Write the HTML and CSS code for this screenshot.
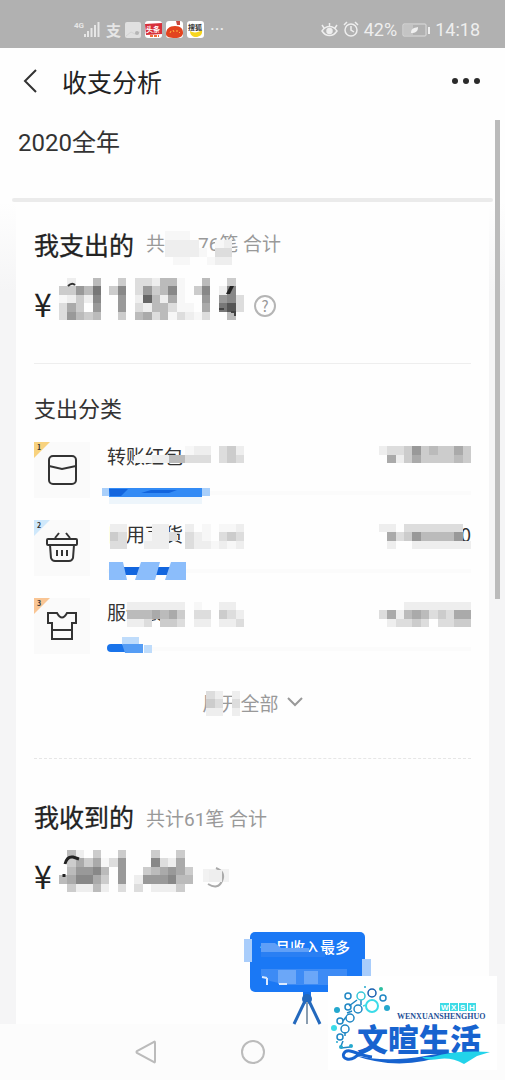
FILE: index.html
```html
<!DOCTYPE html>
<html lang="zh-CN">
<head>
    <meta charset="UTF-8">
    <meta name="viewport" content="width=device-width, initial-scale=1.0">
    <title>收支分析</title>
    <link rel="stylesheet" href="styles.css">
</head>
<body>
    <div class="status-bar">
        <div class="status-left">
            <svg width="28" height="20" viewBox="0 0 28 20">
                <text class="network" x="0" y="8">4G</text>
                <path d="M11 17v-3M14 17v-6M17.500 17v-9M21 17V5M24.500 17V2" stroke="#e6e6e6" stroke-width="2" />
            </svg>
            <span class="pay-mark">支</span>
            <svg width="16" height="16" viewBox="0 0 16 16">
                <rect width="16" height="16" rx="2" fill="#e0e0e0" />
                <path d="M1 14l5-4 4 2 5-2" fill="none" stroke="#d2d2d2" />
                <circle cx="12" cy="11" r="2" fill="#b5b5b5" />
            </svg>
            <svg width="17" height="17" viewBox="0 0 17 17">
                <rect width="17" height="17" rx="3" fill="#fff" />
                <path d="M0 3l17-1v11L1 14z" fill="#d7303a" />
                <text class="app-name app-name-light" x="1" y="11">头条</text>
                <path d="M5 15h9" stroke="#f06a35" stroke-width="2" stroke-dasharray="3 1" />
            </svg>
            <svg width="17" height="17" viewBox="0 0 17 17">
                <rect width="17" height="17" rx="3" fill="#fff" />
                <path d="M0 13c0-5 3-8 9-8s8 3 8 7c0 3-3 5-8 5s-9-1-9-4z" fill="#e2431f" />
                <path d="M10 0h4v4h-3z" fill="#c8493f" />
                <path d="M4 12l1-2M7 9l1 2M11 9v2M13 11l1 1" stroke="#ffb43b" />
            </svg>
            <svg width="17" height="17" viewBox="0 0 17 17">
                <rect width="17" height="17" rx="3" fill="#fff" />
                <path d="M3 10c3 2 8 2 12-1 1 5-3 7-6 7s-6-2-6-6z" fill="#f6d51e" />
                <text class="app-name" x="1" y="9">搜狐</text>
            </svg>
            <span class="more-dots">···</span>
        </div>
        <div class="status-right">
            <svg width="17" height="16" viewBox="0 0 17 16" fill="none" stroke="#eee" stroke-width="1.500">
                <path d="M1 9c4-6 11-6 15 0-4 6-11 6-15 0zM1 3l2 3M8.500 1v3M16 3l-2 3" />
                <circle cx="8.500" cy="9" r="2.500" fill="#eee" />
            </svg>
            <svg width="16" height="17" viewBox="0 0 16 17" fill="none" stroke="#eee" stroke-width="1.500">
                <circle cx="8" cy="9" r="6" />
                <path d="M8 5v4l3 2M1 4l3-3M15 4l-3-3" />
            </svg>
            <span>42%</span>
            <svg class="battery" width="28" height="14" viewBox="0 0 28 14">
                <rect x="1" y="1" width="23" height="12" rx="1" fill="none" stroke="#ddd" />
                <rect x="2" y="2" width="9" height="10" fill="#c4c4c4" />
                <path d="M9 10c0-4 2-5 7-6 0 4-2 6-7 6z" fill="#f0f0f0" />
                <path d="M27 4v7" stroke="#eee" stroke-width="2" />
            </svg>
            <span>14:18</span>
        </div>
    </div>

    <header>
        <button class="back" aria-label="返回">
            <svg width="16" height="26" viewBox="0 0 16 26"><path d="M14 2L3 13l11 11" fill="none" stroke="#333" stroke-width="2" /></svg>
        </button>
        <h1>收支分析</h1>
        <button class="menu" aria-label="更多">
            <svg width="30" height="8" viewBox="0 0 30 8" fill="#2b2b2b">
                <circle cx="4" cy="4" r="3" /><circle cx="15" cy="4" r="3" /><circle cx="26" cy="4" r="3" />
            </svg>
        </button>
    </header>

    <main>
        <div class="period">2020全年</div>
        <div class="slot"></div>
        <div class="scroll-thumb"></div>

        <div class="sheet">
            <section class="card">
                <div class="card-head">
                    <h2>我支出的</h2>
                    <p class="count">共<svg class="mosaic" data-rows="fff.....|eeee..fe|eeeef.dd|.ff..fee"></svg>76笔 合计</p>
                </div>
                <div class="amount">
                    <span class="yen">¥</span>
                    <span class="hidden-sum">
                        <svg class="mosaic" data-rows=".e..b..c.ddebbf..b..c.|cc9b7.c8.d9cb8f.c8.e8.|fece8..9.e6beaf..9.98d|dac.9..9.debbdff.a.75d|d9bcb..c.badbfdefd..b."></svg>
                        <svg class="trace" width="185" height="42" viewBox="0 0 185 42">
                            <path d="M9 8q4-4 7-1" fill="none" stroke="#333" stroke-width="2" />
                            <path d="M171 8h4l-4 8h-4z" fill="#222" />
                            <path d="M160 31h5M172 34h4v4" fill="none" stroke="#444" stroke-width="2" />
                        </svg>
                    </span>
                    <button class="help" aria-label="说明">?</button>
                </div>
                <hr>
                <h3>支出分类</h3>
                <ul class="categories">
                    <li>
                        <div class="tile rank-1">
                            <span class="rank">1</span>
                            <svg width="32" height="32" viewBox="0 0 32 32" fill="none" stroke="#333" stroke-width="2">
                                <rect x="3" y="2" width="27" height="28" rx="4" />
                                <path d="M3 12l13 3 14-3" />
                            </svg>
                        </div>
                        <div class="detail">
                            <div class="line">
                                <span class="name">转账红包
                                    <svg class="mosaic" data-rows=".........fee.dce|...ffeebbddd.dcd"></svg>
                                </span>
                                <svg class="mosaic" data-rows="eddc9cbccac|.aecaccccbc"></svg>
                            </div>
                            <div class="bar">
                                <svg width="112" height="16" viewBox="0 0 112 16">
                                    <path d="M2 9h93v7H2z" fill="#edf5fb" />
                                    <path d="M-5 0H3v8h-8zM95 0h8v8h-8z" fill="#a9cffa" />
                                    <path d="M2 0h93v9H2z" fill="#338bf5" />
                                    <path d="M2 1h19l-7 7H3zM44 2h26l-8 3H34z" fill="#1265de" />
                                </svg>
                            </div>
                        </div>
                    </li>
                    <li>
                        <div class="tile rank-2">
                            <span class="rank">2</span>
                            <svg width="32" height="32" viewBox="0 0 32 32" fill="none" stroke="#333" stroke-width="2">
                                <path d="M9 6l4-5M20 1l4 5" />
                                <rect x="1" y="7" width="30" height="6" rx="1" />
                                <path d="M4 13l1 13q1 3 4 3h14q3 0 4-3l1-13M11 18v6M16 18v6M21 18v6" />
                            </svg>
                        </div>
                        <div class="detail">
                            <div class="line">
                                <span class="name">日用百货
                                    <svg class="mosaic" data-rows="ee...ee..e.f.ffe|cd..feed.def.dcd|dd..eee..deefefe"></svg>
                                </span>
                                <span class="last-digit">0
                                    <svg class="mosaic" data-rows="ee.ddddddd.|.adc9bbbb9.|.e..eeeeeee"></svg>
                                </span>
                            </div>
                            <div class="bar">
                                <svg width="112" height="16" viewBox="0 0 112 16">
                                    <path d="M8 1h60v8H8z" fill="#1265de" />
                                    <path d="M2-4h14l4 18H2zM34-4h19l-5 18H28zM64-4h15v18H58z" fill="#8bbdfb" />
                                </svg>
                            </div>
                        </div>
                    </li>
                    <li>
                        <div class="tile rank-3">
                            <span class="rank">3</span>
                            <svg width="32" height="32" viewBox="0 0 32 32" fill="none" stroke="#333" stroke-width="2">
                                <path d="M2 3h9q5 9 10 0h9v10h-4v16H6V13H2zM6 20h20" />
                            </svg>
                        </div>
                        <div class="detail">
                            <div class="line">
                                <span class="name">服饰装扮
                                    <svg class="mosaic" data-rows="..eeeeeee.f..ee.|..bbbabac.dd.cde|..eed.ccd.ee.eed"></svg>
                                </span>
                                <svg class="mosaic" data-rows="...eeeeeeee|daebabdcdaa|.eddcd.ddcc"></svg>
                            </div>
                            <div class="bar">
                                <svg width="112" height="16" viewBox="0 0 112 16">
                                    <path d="M4 0h32v8H4q-4 0-4-4t4-4z" fill="#1973ea" />
                                    <path d="M15-7h17v8H15zM37 1h8v8h-8z" fill="#bfdcfb" />
                                    <path d="M15 0h21v9H18z" fill="#559df5" />
                                </svg>
                            </div>
                        </div>
                    </li>
                </ul>
                <button class="expand">
                    <span class="expand-text">展开全部
                        <svg class="mosaic" data-rows="de.e|cd.d|ee.e"></svg>
                    </span>
                    <svg width="16" height="10" viewBox="0 0 16 10"><path d="M1 1l7 7 7-7" fill="none" stroke="#999" stroke-width="2" /></svg>
                </button>
            </section>

            <section class="card income">
                <div class="card-head">
                    <h2>我收到的</h2>
                    <p class="count">共计61笔 合计</p>
                </div>
                <div class="amount">
                    <span class="yen">¥</span>
                    <span class="hidden-sum">
                        <svg class="mosaic" data-rows=".be.c..c...c..c.|.cacafd9...8dea.|.b998b.9..cba9ac|ba88ac.9.e9998bb|.ceebe.d.d.eeec."></svg>
                        <svg class="trace" width="134" height="42" viewBox="0 0 134 42">
                            <path d="M5 24v3M6 14q2-8 8-7l6 2" fill="none" stroke="#222" stroke-width="3" />
                        </svg>
                    </span>
                    <svg class="covered-help" width="30" height="24" viewBox="0 0 30 24">
                        <path d="M0 4h26v13H0z" fill="#f2f2f2" />
                        <path d="M5 19q10 6 14-3t-6-13" fill="none" stroke="#aaa" stroke-width="2" />
                        <path d="M6 5h13v12H6z" fill="#eee" />
                    </svg>
                </div>
                <div class="sign">
                    <svg width="130" height="92" viewBox="0 0 130 92">
                        <path d="M61 60h8v5h-8z" fill="#1670e8" />
                        <circle cx="65" cy="67" r="5" fill="#2469bd" />
                        <path d="M63 69L52 92M67 69l11 23" stroke="#2469bd" stroke-width="3" />
                        <path d="M65 70v22" stroke="#8a9db0" stroke-width="2" />
                        <rect x="8" y="0" width="115" height="60" rx="5" fill="#1a78f5" />
                        <text class="sign-text" x="18" y="21">一月收入最多</text>
                        <path d="M19 11h14l6 5h28v4H19z" fill="#5f9ff7" />
                        <path d="M19 20h54l10-1v6H19z" fill="#2a7ff3" />
                        <path d="M19 37h86v16H45l-17-4-9-5z" fill="#3d8bf5" />
                        <path d="M36 38h18v14H36zM62 39h14v13H62z" fill="#6ba7f8" />
                        <path d="M20 45l5 1M25 46v7M37 52h8" stroke="#dceafe" stroke-width="2" />
                        <path d="M2 7h8v23H2z" fill="#a9cdfb" />
                        <path d="M120 27h9v18h-9z" fill="#a9cdfb" />
                    </svg>
                </div>
            </section>
        </div>
    </main>

    <footer>
        <button aria-label="后退">
            <svg width="24" height="26" viewBox="0 0 24 26"><path d="M20 3q1-1 1 1v18q0 2-1 1L3 14q-1-1 0-2z" fill="none" stroke="#bbb" stroke-width="2" /></svg>
        </button>
        <button aria-label="主页">
            <svg width="24" height="26" viewBox="0 0 24 26"><circle cx="12" cy="13" r="11" fill="none" stroke="#bbb" stroke-width="2" /></svg>
        </button>
        <span class="nav-space"></span>
    </footer>

    <div class="watermark">
        <svg width="169" height="94" viewBox="0 0 169 94">
            <g fill="none" stroke="#2087c4" stroke-width="1.500">
                <path d="M29 24l-8 6M33 24v5M24 35l-5 2M18 41l-3 4M17 56v4M15 65l-2 5M13 72l9-1" />
                <circle cx="20" cy="20" r="3" />
                <circle cx="44" cy="17" r="4" stroke="#175fb0" />
                <circle cx="55" cy="22" r="3" />
                <circle cx="33" cy="20" r="4" stroke="#36c8d8" />
                <circle cx="20" cy="31" r="3" />
                <circle cx="30" cy="33" r="4" />
                <circle cx="22" cy="42" r="4" />
                <circle cx="12" cy="45" r="3" />
                <circle cx="17" cy="53" r="4" />
                <circle cx="12" cy="61" r="3" />
                <path d="M35 30l3-1" stroke="#3bd7e5" />
                <circle cx="44" cy="30" r="6" stroke="#3bdbe8" stroke-width="2" />
            </g>
            <g fill="#24a8ce">
                <circle cx="9" cy="34" r="3" />
                <circle cx="59" cy="32" r="3" />
                <circle cx="6" cy="52" r="3" fill="#3bdbe8" />
                <circle cx="37" cy="11" r="1" />
                <circle cx="53" cy="13" r="2" fill="#2bbfa0" />
                <circle cx="9" cy="66" r="1" />
                <circle cx="13" cy="71" r="2" />
                <circle cx="23" cy="70" r="2" />
            </g>
            <path d="M112 27h9v8h-9zM122 27h8v8h-8zM131 27h8v8h-8zM140 27h8v8h-8z" fill="#3edbe6" />
            <text class="mark-tag" x="113 123 132 141" y="34">WXSH</text>
            <text class="mark-pinyin" x="69" y="43">WENXUANSHENGHUO</text>
            <text class="mark-name" x="29" y="75">文暄生活</text>
            <path d="M34 75q-9 10-15 8c-7-2-3-9 3-8s12 5 22 6" fill="none" stroke="#1763cf" stroke-width="3" />
            <path d="M25 79q32 8 72 1 21-4 40-3c-16 1-27 5-41 8q-35 7-71-6z" fill="#1763cf" />
            <path d="M104 81q25-7 58-5l-13 4-13 8q-13-7-25-5t-17-2z" fill="#22d3ea" />
        </svg>
    </div>

    <script src="script.js"></script>
</body>
</html>
```
FILE: styles.css
```css
/* Global Styles */
* {
    box-sizing: border-box;
}

body {
    position: relative;
    display: flex;
    flex-direction: column;
    min-height: 100vh;
    margin: 0;
    font-family: 'Noto Sans CJK SC', sans-serif;
    background-color: #fefefe;
    color: #333;
}

h1, h2, h3, p, ul {
    margin: 0;
    padding: 0;
    font-weight: 400;
}

button {
    padding: 0;
    border: none;
    background: none;
    font-family: inherit;
    cursor: pointer;
}

svg {
    display: block;
    flex-shrink: 0;
    overflow: visible;
}

/* Status bar */
.status-bar {
    display: flex;
    justify-content: space-between;
    height: 48px;
    padding: 11px 25px 0 74px;
    background-color: #b1b1b1;
    color: #eee;
    font-family: Roboto, sans-serif;
    font-size: 18px;
}

.status-left,
.status-right {
    display: flex;
    align-items: center;
    gap: 4px;
}

.status-right {
    gap: 5px;
}

.network {
    font-size: 8px;
    font-weight: 700;
    fill: #e6e6e6;
}

.pay-mark {
    font-family: 'Noto Sans CJK SC', sans-serif;
    font-size: 15px;
    font-weight: 700;
    color: #e6e6e6;
}

.app-name {
    font-family: 'Noto Sans CJK SC', sans-serif;
    font-size: 7px;
    font-weight: 700;
    fill: #333;
}

.app-name-light {
    fill: #fff;
}

.more-dots {
    margin-left: 2px;
}

/* Title bar */
header {
    display: flex;
    align-items: center;
    height: 67px;
    padding: 0 24px 2px 22px;
}

header h1 {
    flex: 1;
    margin-left: 24px;
    font-size: 25px;
    line-height: 36px;
    color: #222;
}

/* Report */
main {
    position: relative;
    flex: 1;
    display: flex;
    flex-direction: column;
}

.period {
    padding: 10px 18px 0;
    font-family: Roboto, 'Noto Sans CJK SC', sans-serif;
    font-size: 24px;
    line-height: 36px;
}

.slot {
    height: 4px;
    margin: 37px 12px 0;
    border-radius: 2px;
    background-color: #ebebeb;
}

.scroll-thumb {
    position: absolute;
    top: 5px;
    right: 5px;
    width: 5px;
    height: 479px;
    background-color: #bbb;
}

.sheet {
    flex: 1;
    display: flex;
    flex-direction: column;
    padding: 0 16px;
    background: linear-gradient(#fefefe, #f5f5f6 90px);
}

.card {
    padding: 24px 18px 41px;
    background-color: #fefefe;
}

.card-head {
    display: flex;
    align-items: center;
    gap: 12px;
    height: 36px;
}

h2 {
    font-size: 25px;
    line-height: 36px;
    color: #222;
    -webkit-text-stroke: 0.3px #222;
}

.count {
    display: flex;
    padding-top: 8px;
    white-space: pre;
    font-family: Roboto, 'Noto Sans CJK SC', sans-serif;
    font-size: 19px;
    line-height: 28px;
    color: #999;
}

/* the cells run on past the gap and over the digits */
.count .mosaic {
    position: relative;
    margin-right: -34px;
}

.amount {
    display: flex;
    align-items: center;
    height: 42px;
    margin-top: 16px;
}

.yen {
    width: 25px;
    margin-top: 8px;
    font-size: 32px;
    line-height: 42px;
    color: #222;
}

.hidden-sum {
    position: relative;
}

.trace {
    position: absolute;
    top: 0;
    left: 0;
}

.help {
    width: 22px;
    height: 22px;
    margin: 14px 0 0 10px;
    border: 2px solid #b5b5b5;
    border-radius: 50%;
    font-size: 15px;
    line-height: 18px;
    color: #999;
}

.covered-help {
    margin: 12px 0 0 10px;
}

hr {
    margin: 43px 0 0;
    border: none;
    border-top: 1px solid #eee;
}

h3 {
    margin-top: 28px;
    font-size: 22px;
    line-height: 30px;
}

/* Category list */
.categories {
    display: grid;
    gap: 22px;
    margin-top: 20px;
    list-style: none;
}

.categories li {
    display: flex;
    gap: 17px;
}

.tile {
    position: relative;
    display: grid;
    place-items: center;
    width: 56px;
    height: 56px;
    background-color: #fafafa;
}

.tile::before {
    content: "";
    position: absolute;
    top: 0;
    left: 0;
    border-top: 16px solid #f8d27e;
    border-right: 16px solid transparent;
}

.rank-2::before {
    border-top-color: #cfe8fb;
}

.rank-3::before {
    border-top-color: #f9c594;
}

.rank {
    position: absolute;
    top: 0;
    left: 3px;
    font-size: 7px;
    line-height: 10px;
    font-weight: 700;
}

.detail {
    flex: 1;
}

.line {
    display: flex;
    justify-content: space-between;
    height: 46px;
    padding-top: 4px;
    font-size: 19px;
    line-height: 20px;
}

.name,
.last-digit {
    position: relative;
}

.name .mosaic {
    position: absolute;
    top: 0;
    left: 3px;
}

.last-digit {
    width: 92px;
    text-align: right;
}

.last-digit .mosaic {
    position: absolute;
    top: 0;
    right: 0;
}

.bar {
    height: 8px;
    background: linear-gradient(#fbfbfb, #fbfbfb) no-repeat 0 3px / 100% 4px;
}

.expand {
    display: flex;
    align-items: center;
    gap: 8px;
    height: 30px;
    margin: 33px auto 0;
    font-size: 19px;
    color: #999;
}

.expand-text {
    position: relative;
}

.expand-text .mosaic {
    position: absolute;
    top: 2px;
    left: 4px;
}

/* Income */
.income {
    position: relative;
    flex: 1;
    padding-top: 40px;
    padding-bottom: 0;
}

.income::before {
    content: "";
    position: absolute;
    top: 0;
    left: 18px;
    right: 18px;
    border-top: 1px dashed #e6e6e6;
}

.sign {
    display: flex;
    justify-content: center;
    margin-top: 40px;
    padding-left: 108px;
}

.sign-text {
    font-size: 15px;
    font-weight: 500;
    fill: #fff;
}

/* System navigation */
footer {
    display: grid;
    grid-template-columns: repeat(3, 1fr);
    align-items: center;
    height: 56px;
    padding: 0 92px;
    background-color: #fcfcfc;
}

footer button {
    display: grid;
    place-items: center;
}

/* Watermark */
.watermark {
    position: absolute;
    right: 8px;
    bottom: 10px;
    background-color: #fff;
}

.mark-tag {
    font-family: 'Liberation Sans', sans-serif;
    font-size: 8px;
    font-weight: 700;
    fill: #fff;
}

.mark-pinyin {
    font-family: 'Liberation Serif', serif;
    font-size: 8px;
    font-weight: 700;
    fill: #1e4f96;
}

.mark-name {
    font-family: 'Liberation Sans', 'Noto Sans CJK SC', sans-serif;
    font-size: 31px;
    font-weight: 900;
    fill: #1763cf;
}
```
FILE: script.js
```js
// Each mosaic is a list of rows; one hex digit is the grey of one cell, a dot is an empty cell
const cell = 8.4;

document.querySelectorAll('.mosaic').forEach(svg => {
    const rows = svg.dataset.rows.split('|');
    const cols = rows[0].length;
    svg.setAttribute('viewBox', `0 0 ${cols} ${rows.length}`);
    svg.setAttribute('width', Math.round(cols * cell));
    svg.setAttribute('height', Math.round(rows.length * cell));
    svg.setAttribute('preserveAspectRatio', 'none');
    svg.setAttribute('shape-rendering', 'crispEdges');
    rows.forEach((row, y) => {
        [...row].forEach((shade, x) => {
            if (shade === '.') return;
            const rect = document.createElementNS('http://www.w3.org/2000/svg', 'rect');
            rect.setAttribute('x', x);
            rect.setAttribute('y', y);
            rect.setAttribute('width', 1);
            rect.setAttribute('height', 1);
            rect.setAttribute('fill', shade === 'f' ? '#f7f7f7' : '#' + shade.repeat(3));
            svg.appendChild(rect);
        });
    });
});
```
